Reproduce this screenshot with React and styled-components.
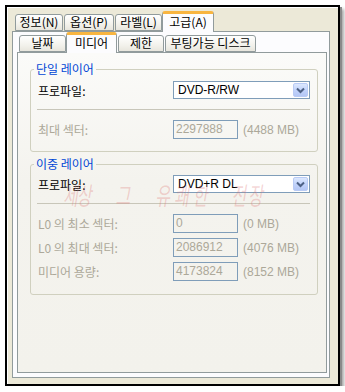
import React from "react";
import styled, { createGlobalStyle } from "styled-components";

const GlobalStyle = createGlobalStyle`
  body {
    margin: 0;
    background: #ffffff;
    font-family: "Liberation Sans", "Noto Sans CJK KR", sans-serif;
    font-size: 12px;
  }
`;

const Frame = styled.div`
  box-sizing: border-box;
  margin: 5px 0 0 5px;
  width: 335px;
  height: 381px;
  border: 2px solid #000;
  background: #ece9d8;
  box-shadow: inset 1px 1px 0 #fff, 2px 2px 0 #8a8a8a, 4px 4px 3px rgba(0, 0, 0, 0.35);
  padding: 4px 8px 0 5px;
`;

const TabStrip = styled.div`
  display: flex;
  align-items: flex-end;
  height: 20px;
`;

const Tab = styled.div`
  position: relative;
  box-sizing: border-box;
  width: ${(p) => p.$w}px;
  margin-left: ${(p) => p.$ml}px;
  height: ${(p) => (p.$active ? 21 : 17)}px;
  margin-bottom: ${(p) => (p.$active ? -1 : 0)}px;
  z-index: ${(p) => (p.$active ? 2 : 0)};
  border: 1px solid #919b9c;
  border-bottom: ${(p) => (p.$active ? "none" : "1px solid #919b9c")};
  border-top: ${(p) => (p.$active ? "3px solid #f8b540" : "1px solid #919b9c")};
  border-radius: 3px 3px 0 0;
  background: ${(p) =>
    p.$active ? "#fcfcfe" : "linear-gradient(#ffffff, #f3f2ec 60%, #e8e6dd)"};
  color: #000;
  font-family: "Noto Sans CJK KR", "Liberation Sans", sans-serif;
  font-size: 12px;
  line-height: ${(p) => (p.$active ? 15 : 14)}px;
  text-align: center;
  white-space: nowrap;
`;

const OuterPanel = styled.div`
  box-sizing: border-box;
  width: 318px;
  height: 347px;
  border: 1px solid #919b9c;
  background: #fcfcfe;
  padding: 0 0 0 4px;
`;

const InnerPanel = styled.div`
  position: relative;
  box-sizing: border-box;
  width: 310px;
  height: 321px;
  border: 1px solid #919b9c;
  background: linear-gradient(#fbfbf9, #f4f3ee 40%, #f3f2ec);
  padding: 0 0 0 12px;
`;

const Group = styled.fieldset`
  box-sizing: border-box;
  width: 288px;
  margin: ${(p) => p.$mt}px 0 0 0;
  padding: 0 0 ${(p) => p.$pb}px 3px;
  border: 1px solid #d0d0bf;
  border-radius: 3px;
  min-width: 0;
`;

const Legend = styled.legend`
  padding: 0 2px;
  color: #0046d5;
  font-family: "Noto Sans CJK KR", sans-serif;
  font-size: 12px;
  line-height: 14px;
`;

const Body = styled.div`
  display: grid;
  grid-template-columns: 135px 65px 70px;
  align-items: center;
  padding-left: 4px;
`;

const Label = styled.div`
  color: ${(p) => (p.$disabled ? "#aca899" : "#000")};
  font-family: "Noto Sans CJK KR", sans-serif;
  font-size: 12px;
  margin-top: ${(p) => p.$mt || 0}px;
  white-space: nowrap;
`;

const Combo = styled.div`
  grid-column: 2 / 4;
  box-sizing: border-box;
  width: 137px;
  height: 18px;
  margin-top: ${(p) => p.$mt}px;
  border: 1px solid #7f9db9;
  background: #fff;
  display: flex;
  align-items: center;
  justify-content: space-between;
  padding: 0 1px 0 4px;
  font-size: 12px;
  color: #000;
`;

const ComboButton = styled.div`
  width: 15px;
  height: 14px;
  border-radius: 2px;
  background: linear-gradient(#dde8fe, #c2d3fb 50%, #b4c7f5);
  border: 1px solid #b9cbf5;
  box-sizing: border-box;
  display: flex;
  align-items: center;
  justify-content: center;
`;

const Separator = styled.div`
  grid-column: 1 / 4;
  height: 1px;
  margin: 10px 0 0 -1px;
  width: 273px;
  background: #c8c6b9;
`;

const Field = styled.div`
  box-sizing: border-box;
  width: 65px;
  height: 19px;
  margin-top: ${(p) => p.$mt}px;
  border: 1px solid #7f9db9;
  padding-left: 2px;
  color: #aca899;
  font-size: 12px;
  line-height: 17px;
`;

const Unit = styled.div`
  margin-top: ${(p) => p.$mt}px;
  padding-left: 5px;
  color: #aca899;
  font-size: 12px;
  white-space: nowrap;
`;

const Watermark = styled.div`
  position: absolute;
  left: 45px;
  top: 127px;
  display: flex;
  transform: scaleY(1.55);
  transform-origin: left top;
  pointer-events: none;
`;

const WatermarkWord = styled.span`
  margin-left: ${(p) => p.$ml}px;
  letter-spacing: ${(p) => p.$ls}px;
  color: rgba(222, 115, 115, 0.3);
  font-family: "Noto Sans CJK KR", sans-serif;
  font-size: 16px;
  line-height: 18px;
  font-style: italic;
  white-space: nowrap;
`;

function Chevron() {
  return (
    <svg width="9" height="7" viewBox="0 0 9 7">
      <path d="M1 1.5 L4.5 5 L8 1.5" fill="none" stroke="#4d6185" strokeWidth="2" />
    </svg>
  );
}

function DataRow({ label, value, unit, mt }) {
  return (
    <>
      <Label $disabled $mt={mt}>{label}</Label>
      <Field $mt={mt}>{value}</Field>
      <Unit $mt={mt}>{unit}</Unit>
    </>
  );
}

export default function App() {
  return (
    <>
      <GlobalStyle />
      <Frame>
        <TabStrip>
          <Tab $w={48} $ml={3}>정보(N)</Tab>
          <Tab $w={50} $ml={1}>옵션(P)</Tab>
          <Tab $w={47} $ml={1}>라벨(L)</Tab>
          <Tab $w={52} $ml={0} $active>고급(A)</Tab>
        </TabStrip>
        <OuterPanel>
          <TabStrip>
            <Tab $w={47} $ml={2}>날짜</Tab>
            <Tab $w={51} $ml={0} $active>미디어</Tab>
            <Tab $w={46} $ml={1}>제한</Tab>
            <Tab $w={91} $ml={1}>부팅가능 디스크</Tab>
          </TabStrip>
          <InnerPanel>
            <Group $mt={9} $pb={12}>
              <Legend>단일 레이어</Legend>
              <Body>
                <Label $mt={5}>프로파일:</Label>
                <Combo $mt={5}>
                  DVD-R/RW
                  <ComboButton>
                    <Chevron />
                  </ComboButton>
                </Combo>
                <Separator />
                <DataRow label="최대 섹터:" value="2297888" unit="(4488 MB)" mt={10} />
              </Body>
            </Group>
            <Group $mt={5} $pb={13}>
              <Legend>이중 레이어</Legend>
              <Body>
                <Label $mt={4}>프로파일:</Label>
                <Combo $mt={4}>
                  DVD+R DL
                  <ComboButton>
                    <Chevron />
                  </ComboButton>
                </Combo>
                <Separator />
                <DataRow label="L0 의 최소 섹터:" value="0" unit="(0 MB)" mt={10} />
                <DataRow label="L0 의 최대 섹터:" value="2086912" unit="(4076 MB)" mt={5} />
                <DataRow label="미디어 용량:" value="4173824" unit="(8152 MB)" mt={5} />
              </Body>
            </Group>
            <Watermark>
              <WatermarkWord $ml={0} $ls={-1}>세상</WatermarkWord>
              <WatermarkWord $ml={25} $ls={0}>그</WatermarkWord>
              <WatermarkWord $ml={25} $ls={4}>유쾌한</WatermarkWord>
              <WatermarkWord $ml={20} $ls={2}>전장</WatermarkWord>
            </Watermark>
          </InnerPanel>
        </OuterPanel>
      </Frame>
    </>
  );
}
